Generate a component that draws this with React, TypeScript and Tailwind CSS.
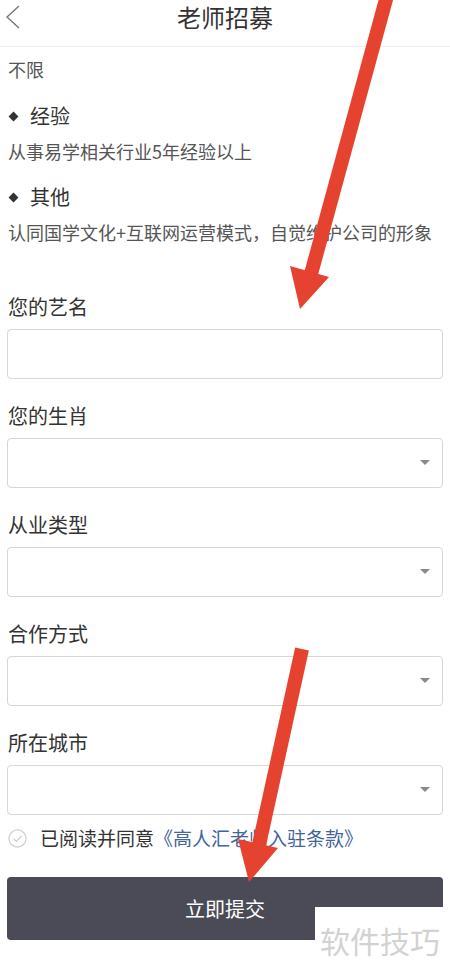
const font = { fontFamily: '"Noto Sans CJK SC", "Noto Sans", sans-serif' }

function Caret() {
  return (
    <svg width="10" height="6" viewBox="0 0 10 6" className="shrink-0">
      <path d="M0 0 L10 0 L5 5 Z" fill="#8a8a8a" />
    </svg>
  )
}

function Field({ label, select, first }: { label: string; select?: boolean; first?: boolean }) {
  return (
    <div>
      <div className={`${first ? 'mt-[49px]' : 'mt-[23px]'} pl-[8px] text-[20px] leading-[28px] text-[#333]`}>
        {label}
      </div>
      <div className="mt-[8px] mx-[7px] h-[50px] rounded-[4px] border border-[#d6d6d6] bg-white flex items-center justify-end pr-[12px]">
        {select ? <Caret /> : null}
      </div>
    </div>
  )
}

function Bullet({ title }: { title: string }) {
  return (
    <div className="flex items-center pl-[10px] text-[20px] leading-[28px] text-[#333]">
      <span className="w-[7px] h-[7px] rotate-45 bg-[#333]" />
      <span className="ml-[13px]">{title}</span>
    </div>
  )
}

export default function App() {
  const fields = ['您的生肖', '从业类型', '合作方式', '所在城市']

  return (
    <div className="relative w-[450px] h-[975px] overflow-hidden bg-white" style={font}>
      <div className="h-[47px] border-b border-[#f0f0f0]">
        <div className="grid grid-cols-[40px_1fr_40px] h-[34px] items-center">
          <svg width="20" height="28" viewBox="0 0 20 28" className="ml-[3px]">
            <path d="M16 3 L4 14 L16 25" fill="none" stroke="#777" strokeWidth="1.4" />
          </svg>
          <div className="text-center text-[24px] leading-[30px] text-[#333]">老师招募</div>
          <div />
        </div>
      </div>

      <div className="text-[18px] leading-[24px] text-[#555]">
        <div className="mt-[10px] pl-[8px]">不限</div>
        <div className="mt-[21px]">
          <Bullet title="经验" />
        </div>
        <div className="mt-[9px] pl-[8px]">从事易学相关行业5年经验以上</div>
        <div className="mt-[20px]">
          <Bullet title="其他" />
        </div>
        <div className="mt-[9px] pl-[8px] whitespace-nowrap">认同国学文化+互联网运营模式，自觉维护公司的形象</div>
      </div>

      <Field label="您的艺名" first />
      {fields.map(f => (
        <Field key={f} label={f} select />
      ))}

      <div className="mt-[10px] pl-[8px] flex items-center text-[19px] leading-[26px]">
        <svg width="19" height="19" viewBox="0 0 20 20" className="shrink-0">
          <circle cx="10" cy="10" r="9" fill="none" stroke="#cfcfcf" strokeWidth="1.3" />
          <path d="M5.8 10.2 L8.8 13 L14.2 7.4" fill="none" stroke="#cfcfcf" strokeWidth="1.3" />
        </svg>
        <span className="ml-[13px] text-[#333]">已阅读并同意</span>
        <span className="text-[#41659a]">《高人汇老师入驻条款》</span>
      </div>

      <div className="mt-[26px] mx-[7px] h-[63px] rounded-[4px] bg-[#4a4b57] flex items-center justify-center">
        <span className="text-white text-[20px]">立即提交</span>
      </div>

      {/* watermark */}
      <div className="absolute left-[315px] top-[907px] w-[135px] h-[68px] bg-white pl-[5px] pt-[13px]">
        <span className="text-[30px] leading-[40px] text-[#d2d2d2] whitespace-nowrap">软件技巧</span>
      </div>

      {/* red annotation arrows */}
      <svg className="absolute inset-0 pointer-events-none" width="450" height="975" viewBox="0 0 450 975">
        <line x1="388" y1="-8" x2="311" y2="274" stroke="#e5422f" strokeWidth="14" />
        <polygon points="329,277 290,266 300,309" fill="#e5422f" />
        <line x1="302" y1="649" x2="259" y2="845" stroke="#e5422f" strokeWidth="14" />
        <polygon points="278,848 238,839 249,882" fill="#e5422f" />
      </svg>
    </div>
  )
}
